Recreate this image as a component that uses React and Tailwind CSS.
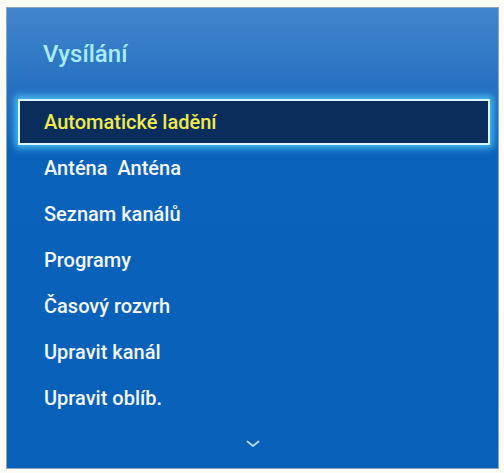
import React from 'react';

const items = [
  'Automatické ladění',
  'Anténa  Anténa',
  'Seznam kanálů',
  'Programy',
  'Časový rozvrh',
  'Upravit kanál',
  'Upravit oblíb.',
];

function MenuRow({ label, selected }) {
  if (selected) {
    return (
      <div className="h-[46px] ml-[11px] mr-[8px] flex items-center border-2 border-[#d9f6ff] bg-[#0a2d5c] shadow-[0_0_7px_3px_rgba(90,220,255,0.75)]">
        <span className="pl-[24px] text-[20px] font-medium text-[#f1ea4c] whitespace-pre">{label}</span>
      </div>
    );
  }
  return (
    <div className="h-[46px] flex items-center pl-[37px]">
      <span className="text-[20px] font-medium text-[#f3f6fa] whitespace-pre">{label}</span>
    </div>
  );
}

export default function App() {
  return (
    <div className="w-[504px] h-[473px] bg-[#fbfbf6] pt-[7px] pl-[6px]" style={{ fontFamily: 'Roboto, "Noto Sans", sans-serif' }}>
      <div className="w-[493px] h-[462px] border border-[#8fa3bb] bg-gradient-to-b from-[#4286cc] via-[#0b62bb] via-30% to-[#0860b8] flex flex-col">
        {/* Title */}
        <div className="h-[91px] pl-[36px] pt-[32px]">
          <span className="text-[24px] leading-[28px] font-medium text-[#a8eef6]">Vysílání</span>
        </div>

        {items.map((label, i) => (
          <MenuRow key={label} label={label} selected={i === 0} />
        ))}

        {/* More indicator */}
        <div className="flex justify-center pt-[19px]">
          <svg width="14" height="8" viewBox="0 0 14 8" fill="none">
            <polyline points="1.5,1.5 7,6 12.5,1.5" stroke="#b9d8f5" strokeWidth="1.8" strokeLinecap="round" strokeLinejoin="round" />
          </svg>
        </div>
      </div>
    </div>
  );
}
